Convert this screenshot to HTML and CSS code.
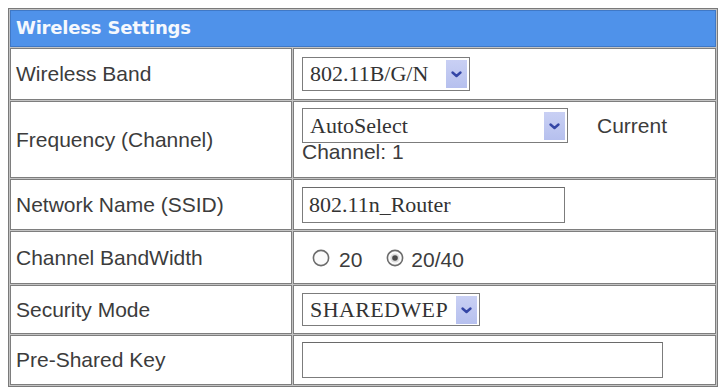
FILE: index.html
```html
<!DOCTYPE html>
<html>
<head>
<meta charset="utf-8">
<link rel="stylesheet" href="styles.css">
</head>
<body>
<div class="form">
  <div class="cell head">Wireless Settings</div>

  <div class="cell label r1">Wireless Band</div>
  <div class="cell value">
    <div class="select sel-band"><span class="sel-text">802.11B/G/N</span><span class="arrow"><svg width="21" height="28" viewBox="0 0 21 28"><path d="M6.5 12.5 L10.5 16 L14.5 12.5" fill="none" stroke="#3446a6" stroke-width="2.4" stroke-linecap="round" stroke-linejoin="round"/></svg></span></div>
  </div>

  <div class="cell label r2">Frequency (Channel)</div>
  <div class="cell value freq">
    <div class="freq-line">
      <div class="select sel-chan"><span class="sel-text">AutoSelect</span><span class="arrow"><svg width="21" height="28" viewBox="0 0 21 28"><path d="M6.5 12.5 L10.5 16 L14.5 12.5" fill="none" stroke="#3446a6" stroke-width="2.4" stroke-linecap="round" stroke-linejoin="round"/></svg></span></div>
      <span class="current">Current</span>
    </div>
    <div class="chan-text">Channel: 1</div>
  </div>

  <div class="cell label r3">Network Name (SSID)</div>
  <div class="cell value">
    <input class="text-in ssid" type="text" value="802.11n_Router">
  </div>

  <div class="cell label r4">Channel BandWidth</div>
  <div class="cell value">
    <div class="radios">
      <span class="radio"><svg width="18" height="18" viewBox="0 0 18 18"><circle cx="9" cy="9" r="7.6" fill="#fbfbfb" stroke="#6c6c6c" stroke-width="1.6"/></svg><span class="radio-text">20</span></span>
      <span class="radio"><svg width="18" height="18" viewBox="0 0 18 18"><circle cx="9" cy="9" r="7.6" fill="#fbfbfb" stroke="#6c6c6c" stroke-width="1.6"/><circle cx="9" cy="9" r="4.6" fill="#dcdcdc"/><circle cx="9" cy="9" r="2.8" fill="#4a4a4a"/></svg><span class="radio-text">20/40</span></span>
    </div>
  </div>

  <div class="cell label r5">Security Mode</div>
  <div class="cell value">
    <div class="select sel-sec"><span class="sel-text">SHAREDWEP</span><span class="arrow"><svg width="21" height="28" viewBox="0 0 21 28"><path d="M6.5 12.5 L10.5 16 L14.5 12.5" fill="none" stroke="#3446a6" stroke-width="2.4" stroke-linecap="round" stroke-linejoin="round"/></svg></span></div>
  </div>

  <div class="cell label r6">Pre-Shared Key</div>
  <div class="cell value">
    <input class="text-in psk" type="text" value="">
  </div>
</div>
</body>
</html>
```

FILE: styles.css
```css
html, body {
  margin: 0;
  padding: 0;
  background: #ffffff;
}

body {
  padding: 8px 0 0 8px;
  font-family: "Liberation Sans", Arial, sans-serif;
  color: #3c3c3c;
}

.form {
  width: 710px;
  box-sizing: border-box;
  border: 1px solid #7a7a7a;
  padding: 1px;
  background: #c4c4c4;
  display: grid;
  grid-template-columns: 282px 1fr;
  grid-template-rows: 37px 52px 77px 51px 53px 49px 50px;
  gap: 1px;
}

.cell {
  box-sizing: border-box;
  border: 1px solid #7e7e7e;
  background: #ffffff;
  display: flex;
  align-items: center;
}

.head {
  grid-column: 1 / span 2;
  background: #4f92ea;
  border-color: #3f78c6;
  color: #f5f8fd;
  font-family: "DejaVu Sans", Verdana, sans-serif;
  font-weight: bold;
  font-size: 18px;
  padding-left: 5px;
  padding-bottom: 2px;
  letter-spacing: -0.2px;
}

.label {
  padding-left: 5px;
  font-size: 21px;
  color: #3c3c3c;
}

.value {
  padding-left: 8px;
  font-size: 21px;
  color: #3c3c3c;
}

.select {
  box-sizing: border-box;
  display: flex;
  align-items: center;
  justify-content: space-between;
  border: 1px solid #7c7c7c;
  background: #ffffff;
  padding: 2px;
  font-family: "Liberation Serif", "Times New Roman", serif;
  font-size: 22px;
  color: #333333;
}

.sel-text {
  padding-left: 5px;
  line-height: 26px;
}

.arrow {
  display: flex;
  width: 21px;
  height: 28px;
  background: linear-gradient(#c9d0f4, #b6c0ee);
}

.sel-band {
  width: 168px;
  height: 34px;
}

.sel-chan {
  width: 266px;
  height: 35px;
}

.sel-sec {
  width: 178px;
  height: 33px;
  letter-spacing: 0.4px;
}

.freq {
  flex-direction: column;
  align-items: flex-start;
  justify-content: flex-start;
  padding-top: 6px;
}

.freq-line {
  display: flex;
  align-items: center;
}

.current {
  margin-left: 29px;
}

.chan-text {
  line-height: 22px;
  margin-top: -2px;
}

.text-in {
  box-sizing: border-box;
  height: 36px;
  border: 1px solid #7c7c7c;
  border-top-color: #6a6a6a;
  background: #ffffff;
  padding: 0 0 0 6px;
  margin: 0;
  font-family: "Liberation Serif", "Times New Roman", serif;
  font-size: 22px;
  color: #333333;
  outline: none;
}

.ssid {
  width: 263px;
}

.psk {
  width: 361px;
}

.radios {
  display: flex;
  align-items: center;
  padding-left: 10px;
  padding-top: 4px;
}

.radio {
  display: flex;
  align-items: center;
  margin-right: 24px;
}

.radio svg {
  margin-top: -3px;
}

.radio-text {
  margin-left: 9px;
  font-size: 21px;
}

.radio + .radio .radio-text {
  margin-left: 7px;
}
```
